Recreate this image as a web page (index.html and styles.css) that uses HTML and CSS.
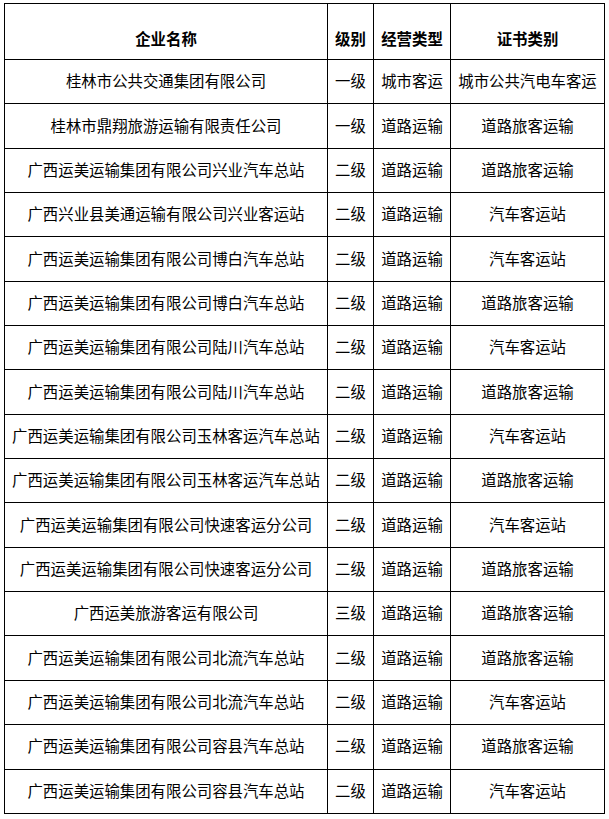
FILE: index.html
```html
<!DOCTYPE html>
<html lang="zh-CN">
<head>
<meta charset="utf-8">
<title>企业名单</title>
<link rel="stylesheet" href="styles.css">
</head>
<body>
<table class="list">
  <colgroup>
    <col class="c-name">
    <col class="c-level">
    <col class="c-type">
    <col class="c-cert">
  </colgroup>
  <thead>
    <tr class="head"><th>企业名称</th><th>级别</th><th>经营类型</th><th>证书类别</th></tr>
  </thead>
  <tbody>
    <tr><td>桂林市公共交通集团有限公司</td><td>一级</td><td>城市客运</td><td>城市公共汽电车客运</td></tr>
    <tr><td>桂林市鼎翔旅游运输有限责任公司</td><td>一级</td><td>道路运输</td><td>道路旅客运输</td></tr>
    <tr><td>广西运美运输集团有限公司兴业汽车总站</td><td>二级</td><td>道路运输</td><td>道路旅客运输</td></tr>
    <tr><td>广西兴业县美通运输有限公司兴业客运站</td><td>二级</td><td>道路运输</td><td>汽车客运站</td></tr>
    <tr><td>广西运美运输集团有限公司博白汽车总站</td><td>二级</td><td>道路运输</td><td>汽车客运站</td></tr>
    <tr><td>广西运美运输集团有限公司博白汽车总站</td><td>二级</td><td>道路运输</td><td>道路旅客运输</td></tr>
    <tr><td>广西运美运输集团有限公司陆川汽车总站</td><td>二级</td><td>道路运输</td><td>汽车客运站</td></tr>
    <tr><td>广西运美运输集团有限公司陆川汽车总站</td><td>二级</td><td>道路运输</td><td>道路旅客运输</td></tr>
    <tr><td>广西运美运输集团有限公司玉林客运汽车总站</td><td>二级</td><td>道路运输</td><td>汽车客运站</td></tr>
    <tr><td>广西运美运输集团有限公司玉林客运汽车总站</td><td>二级</td><td>道路运输</td><td>道路旅客运输</td></tr>
    <tr><td>广西运美运输集团有限公司快速客运分公司</td><td>二级</td><td>道路运输</td><td>汽车客运站</td></tr>
    <tr><td>广西运美运输集团有限公司快速客运分公司</td><td>二级</td><td>道路运输</td><td>道路旅客运输</td></tr>
    <tr><td>广西运美旅游客运有限公司</td><td>三级</td><td>道路运输</td><td>道路旅客运输</td></tr>
    <tr><td>广西运美运输集团有限公司北流汽车总站</td><td>二级</td><td>道路运输</td><td>道路旅客运输</td></tr>
    <tr><td>广西运美运输集团有限公司北流汽车总站</td><td>二级</td><td>道路运输</td><td>汽车客运站</td></tr>
    <tr><td>广西运美运输集团有限公司容县汽车总站</td><td>二级</td><td>道路运输</td><td>道路旅客运输</td></tr>
    <tr><td>广西运美运输集团有限公司容县汽车总站</td><td>二级</td><td>道路运输</td><td>汽车客运站</td></tr>
  </tbody>
</table>
</body>
</html>
```
FILE: styles.css
```css
html, body {
  margin: 0;
  padding: 0;
  background: #fff;
}
body {
  padding: 3px 0 0 4px;
  font-family: "Noto Sans CJK SC", "Noto Sans", sans-serif;
  color: #000;
}
.list {
  border-collapse: collapse;
  table-layout: fixed;
  width: 600px;
  font-size: 15.4px;
}
.c-name { width: 323px; }
.c-level { width: 46px; }
.c-type { width: 77px; }
.c-cert { width: 154px; }
.list th, .list td {
  border: 1px solid #000;
  text-align: center;
  padding: 0;
  white-space: nowrap;
  line-height: 20px;
  vertical-align: middle;
}
.list th {
  height: 42px;
  padding-top: 13px;
  font-weight: bold;
}
.list td {
  height: 40.35px;
  padding-bottom: 3px;
}
```
